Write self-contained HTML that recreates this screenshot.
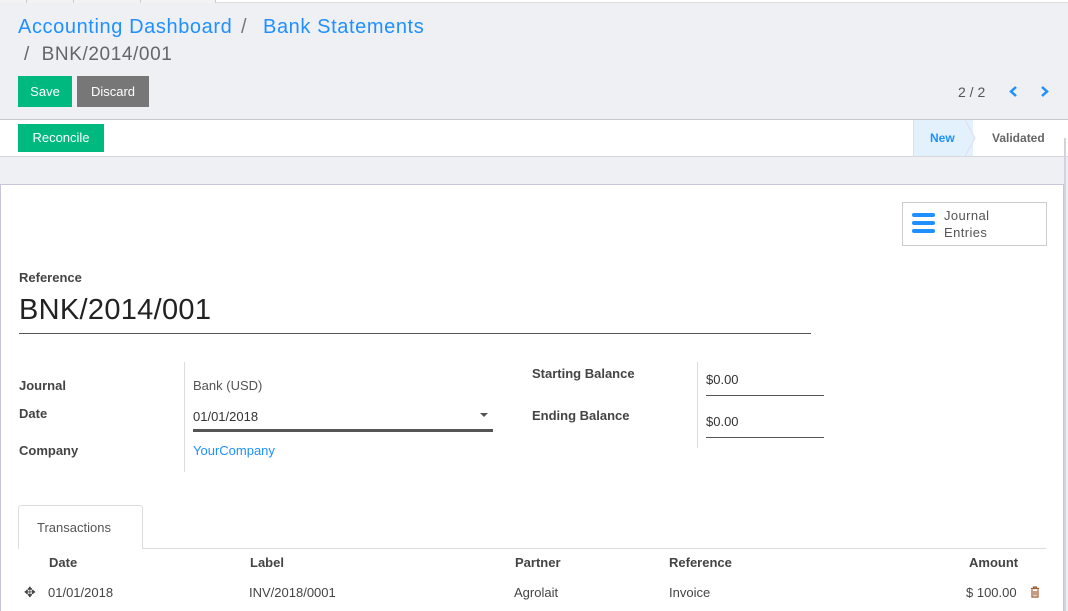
<!DOCTYPE html>
<html><head><meta charset="utf-8"><style>
*{box-sizing:border-box;margin:0;padding:0}
html,body{width:1068px;height:611px;overflow:hidden}
body{background:#eff0f4;font-family:"Liberation Sans",sans-serif;color:#4c4c4c;position:relative;font-size:13px}
.a{position:absolute;white-space:nowrap}
.btn{position:absolute;color:#fff;font-size:13px;text-align:center}
.lbl{font-weight:bold;color:#444;font-size:13px}
</style></head><body>
<div class="a" style="left:0;top:0;width:1068px;height:3px;background:#fff;border-bottom:1px solid #ddd"></div>
<div class="a" style="left:0;top:0;width:216px;height:3px;background:#f2f2f2;border-right:1px solid #ccc"></div>
<div class="a" style="left:26px;top:0;width:1px;height:3px;background:#ccc"></div>
<div class="a" style="left:73px;top:0;width:1px;height:3px;background:#ccc"></div>
<div class="a" style="left:140px;top:0;width:1px;height:3px;background:#ccc"></div>
<div class="a" style="left:18px;top:16px;font-size:20px;letter-spacing:0.6px;color:#1e90ff">Accounting Dashboard</div>
<div class="a" style="left:241px;top:16px;font-size:20px;color:#777">/</div>
<div class="a" style="left:263px;top:16px;font-size:20px;letter-spacing:0.6px;color:#1e90ff">Bank Statements</div>
<div class="a" style="left:24px;top:44px;font-size:19px;letter-spacing:0.6px;color:#666">/ &nbsp;BNK/2014/001</div>
<div class="btn" style="left:18px;top:76px;width:54px;height:31px;line-height:31px;background:#00b97f">Save</div>
<div class="btn" style="left:77px;top:76px;width:72px;height:31px;line-height:31px;background:#777">Discard</div>
<div class="a" style="left:958px;top:84px;font-size:14px;color:#555">2 / 2</div>
<svg class="a" style="left:1008px;top:85px" width="50" height="13"><path d="M8 2L3 6.5L8 11" stroke="#1e90ff" stroke-width="2.5" fill="none"/><path d="M34 2L39 6.5L34 11" stroke="#1e90ff" stroke-width="2.5" fill="none"/></svg>
<div class="a" style="left:0;top:119px;width:1068px;height:38px;background:#fff;border-top:1px solid #c8c8d0;border-bottom:1px solid #d6d6dc"></div>
<div class="btn" style="left:18px;top:124px;width:86px;height:28px;line-height:28px;background:#00b97f">Reconcile</div>
<div class="a" style="left:913px;top:120px;width:60px;height:36px;background:#e3f1fc;border-left:1px solid #dde"></div>
<svg class="a" style="left:965px;top:120px" width="18" height="36"><path d="M0 0L10 18L0 36Z" fill="#e3f1fc"/><path d="M0 0L10 18L0 36" stroke="#dde" fill="none"/></svg>
<div class="a" style="left:930px;top:131px;font-weight:bold;color:#1e90ff;font-size:12px">New</div>
<div class="a" style="left:992px;top:131px;font-weight:bold;color:#666;font-size:12px">Validated</div>
<div class="a" style="left:1064px;top:138px;width:2px;height:473px;background:#d4d2e0"></div>
<div class="a" style="left:0;top:184px;width:1064px;height:427px;background:#fff;border:1px solid #c9c5da;border-bottom:none"></div>
<div class="a" style="left:902px;top:202px;width:145px;height:44px;border:1px solid #ccc;background:#fff"></div>
<div class="a" style="left:912px;top:213px;width:23px;height:4px;border-radius:2px;background:#1e90ff"></div>
<div class="a" style="left:912px;top:221px;width:23px;height:4px;border-radius:2px;background:#1e90ff"></div>
<div class="a" style="left:912px;top:229px;width:23px;height:4px;border-radius:2px;background:#1e90ff"></div>
<div class="a" style="left:944px;top:207px;font-size:13px;letter-spacing:0.4px;color:#555;line-height:17px">Journal<br>Entries</div>
<div class="a lbl" style="left:19px;top:270px">Reference</div>
<div class="a" style="left:19px;top:294px;font-size:29px;letter-spacing:0.3px;color:#222">BNK/2014/001</div>
<div class="a" style="left:19px;top:333px;width:792px;height:1px;background:#555"></div>
<div class="a lbl" style="left:19px;top:378px">Journal</div>
<div class="a lbl" style="left:19px;top:406px">Date</div>
<div class="a lbl" style="left:19px;top:443px">Company</div>
<div class="a" style="left:184px;top:362px;width:1px;height:110px;background:#ddd"></div>
<div class="a" style="left:193px;top:378px;color:#555">Bank (USD)</div>
<div class="a" style="left:193px;top:409px;color:#333">01/01/2018</div>
<svg class="a" style="left:480px;top:413px" width="8" height="5"><path d="M0 0H8L4 4Z" fill="#555"/></svg>
<div class="a" style="left:193px;top:429px;width:300px;height:3px;background:#555"></div>
<div class="a" style="left:193px;top:443px;color:#1e90ff">YourCompany</div>
<div class="a lbl" style="left:532px;top:366px">Starting Balance</div>
<div class="a lbl" style="left:532px;top:408px">Ending Balance</div>
<div class="a" style="left:697px;top:362px;width:1px;height:86px;background:#ddd"></div>
<div class="a" style="left:706px;top:372px;color:#333">$0.00</div>
<div class="a" style="left:706px;top:395px;width:118px;height:1px;background:#555"></div>
<div class="a" style="left:706px;top:414px;color:#333">$0.00</div>
<div class="a" style="left:706px;top:437px;width:118px;height:1px;background:#555"></div>
<div class="a" style="left:18px;top:548px;width:1028px;height:1px;background:#ddd"></div>
<div class="a" style="left:18px;top:505px;width:125px;height:44px;background:#fff;border:1px solid #ddd;border-bottom:none;border-radius:3px 3px 0 0"></div>
<div class="a" style="left:37px;top:520px;color:#555">Transactions</div>
<div class="a lbl" style="left:49px;top:555px">Date</div>
<div class="a lbl" style="left:250px;top:555px">Label</div>
<div class="a lbl" style="left:515px;top:555px">Partner</div>
<div class="a lbl" style="left:669px;top:555px">Reference</div>
<div class="a lbl" style="left:969px;top:555px">Amount</div>
<div class="a" style="left:24px;top:584px;font-size:14px;color:#444">✥</div>
<div class="a" style="left:48px;top:585px;color:#444">01/01/2018</div>
<div class="a" style="left:249px;top:585px;color:#444">INV/2018/0001</div>
<div class="a" style="left:514px;top:585px;color:#444">Agrolait</div>
<div class="a" style="left:669px;top:585px;color:#444">Invoice</div>
<div class="a" style="left:966px;top:585px;color:#444">$ 100.00</div>
<svg class="a" style="left:1030px;top:586px" width="10" height="12"><path d="M1 2.5H9M3.5 2.5V1H6.5V2.5M2 3.5V11H8V3.5M4 5V9.5M6 5V9.5" stroke="#a05a2c" stroke-width="1.2" fill="none"/></svg>
</body></html>
